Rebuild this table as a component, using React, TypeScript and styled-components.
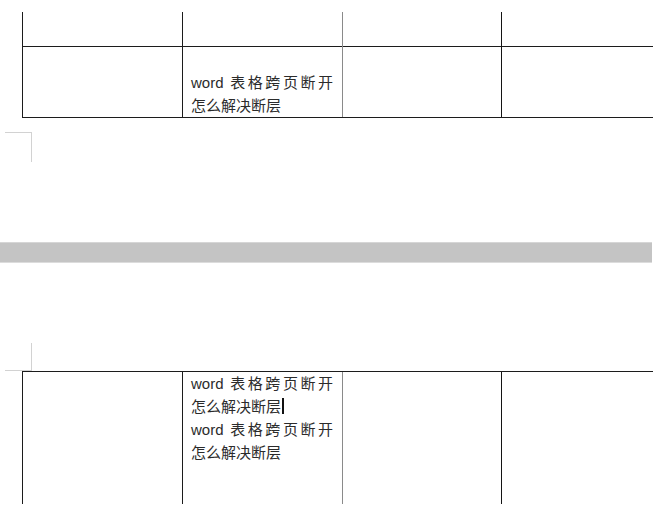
import React from "react";
import styled, { createGlobalStyle } from "styled-components";

const Global = createGlobalStyle`
  html, body { margin: 0; padding: 0; background: #fff; }
  body {
    font-family: "Liberation Sans", "Noto Sans CJK SC", sans-serif;
    color: #2b2b2b;
    overflow: hidden;
  }
`;

const Sheet = styled.div`
  width: 656px;
  height: 515px;
  display: flex;
  flex-direction: column;
  overflow: hidden;
`;

const PageBottom = styled.div`
  padding-top: 12px;
  display: flex;
  flex-direction: column;
`;

const PageTop = styled.div`
  padding-top: 80px;
  display: flex;
  flex-direction: column;
`;

const Table = styled.table`
  margin-left: 22px;
  width: 630px;
  border-collapse: collapse;
  table-layout: fixed;
`;

const Row = styled.tr<{ $h: number }>`
  height: ${(p) => p.$h}px;
`;

const Cell = styled.td<{
  $line?: string;
  $top?: boolean;
  $bottom?: boolean;
  $align?: "top" | "bottom";
}>`
  padding: 0 9px 0 8px;
  border-left: 1px solid ${(p) => p.$line ?? "#1c1c1c"};
  border-top: ${(p) => (p.$top ? "1px solid #1c1c1c" : "none")};
  border-bottom: ${(p) => (p.$bottom ? "1px solid #1c1c1c" : "none")};
  vertical-align: ${(p) => p.$align ?? "top"};
  font-size: 15px;
  line-height: 23px;
`;

const Line = styled.div<{ $spread?: boolean }>`
  text-align: ${(p) => (p.$spread ? "justify" : "left")};
  text-align-last: ${(p) => (p.$spread ? "justify" : "left")};
  white-space: ${(p) => (p.$spread ? "normal" : "nowrap")};
`;

const Caret = styled.span`
  display: inline-block;
  width: 2px;
  height: 16px;
  background: #111;
  vertical-align: -2px;
  margin-left: 1px;
`;

const CornerMark = styled.div<{ $flip?: boolean }>`
  width: 26px;
  height: ${(p) => (p.$flip ? 27 : 29)}px;
  margin-left: 5px;
  margin-top: ${(p) => (p.$flip ? 0 : 14)}px;
  border-right: 1px solid #d2d2d2;
  border-top: ${(p) => (p.$flip ? "none" : "1px solid #d2d2d2")};
  border-bottom: ${(p) => (p.$flip ? "1px solid #d2d2d2" : "none")};
`;

const PageGap = styled.div`
  margin-top: 80px;
  width: 652px;
  height: 19px;
  background: #c4c4c4;
  border-top: 1px solid #d6d6d6;
  border-bottom: 1px solid #dcdcdc;
`;

const widths = [160, 160, 159, 151];
const lines = ["#1c1c1c", "#1c1c1c", "#8a8a8a", "#141414"];

const Cols = () => (
  <colgroup>
    {widths.map((w, i) => (
      <col key={i} style={{ width: w }} />
    ))}
  </colgroup>
);

const Text = ({ caret }: { caret?: boolean }) => (
  <>
    <Line $spread>word 表格跨页断开</Line>
    <Line>
      怎么解决断层{caret && <Caret />}
    </Line>
  </>
);

export default function App() {
  return (
    <Sheet>
      <Global />
      <PageBottom>
        <Table>
          <Cols />
          <tbody>
            <Row $h={34}>
              {lines.map((c, i) => (
                <Cell key={i} $line={c} />
              ))}
            </Row>
            <Row $h={71}>
              {lines.map((c, i) => (
                <Cell key={i} $line={c} $top $bottom $align="bottom">
                  {i === 1 && <Text />}
                </Cell>
              ))}
            </Row>
          </tbody>
        </Table>
        <CornerMark />
      </PageBottom>
      <PageGap />
      <PageTop>
        <CornerMark $flip />
        <Table>
          <Cols />
          <tbody>
            <Row $h={133}>
              {lines.map((c, i) => (
                <Cell key={i} $line={c} $top>
                  {i === 1 && (
                    <>
                      <Text caret />
                      <Text />
                    </>
                  )}
                </Cell>
              ))}
            </Row>
          </tbody>
        </Table>
      </PageTop>
    </Sheet>
  );
}
